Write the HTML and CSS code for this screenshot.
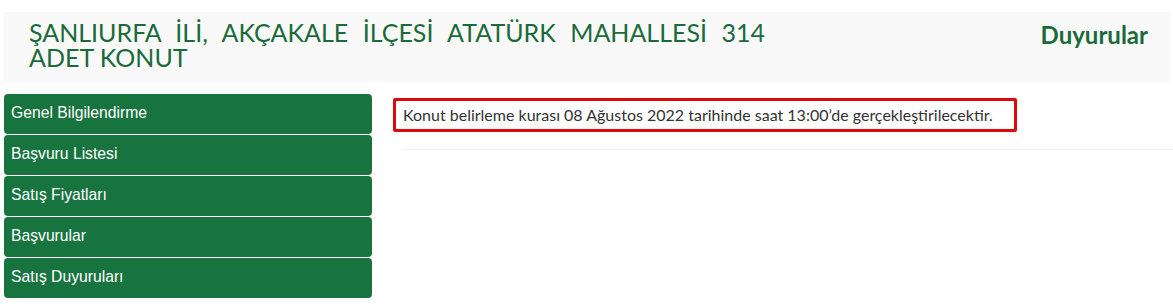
FILE: index.html
```html
<!DOCTYPE html>
<html lang="tr">
<head>
<meta charset="utf-8">
<title>Duyurular</title>
<link rel="stylesheet" href="styles.css">
</head>
<body>
<header class="page-head">
  <h1 class="title">ŞANLIURFA İLİ, AKÇAKALE İLÇESİ ATATÜRK MAHALLESİ 314 ADET KONUT</h1>
  <h2 class="section">Duyurular</h2>
</header>
<div class="main">
  <nav class="sidebar">
    <a class="nav-item" href="#">Genel Bilgilendirme</a>
    <a class="nav-item" href="#">Başvuru Listesi</a>
    <a class="nav-item" href="#">Satış Fiyatları</a>
    <a class="nav-item" href="#">Başvurular</a>
    <a class="nav-item" href="#">Satış Duyuruları</a>
  </nav>
  <section class="content">
    <div class="notice">Konut belirleme kurası 08 Ağustos 2022 tarihinde saat 13:00’de gerçekleştirilecektir.</div>
    <hr class="divider">
  </section>
</div>
</body>
</html>
```
FILE: styles.css
```css
* { box-sizing: border-box; }
body {
  margin: 0;
  background: #fff;
  font-family: "Lato", "Liberation Sans", sans-serif;
}
.page-head {
  margin: 12px 3px 0 3px;
  height: 71px;
  background: #f9f9f9;
  display: flex;
  justify-content: space-between;
  align-items: flex-start;
  padding: 0 22px 0 26px;
}
.title {
  margin: 8px 0 0 0;
  width: 736px;
  font-size: 25px;
  line-height: 25px;
  font-weight: 400;
  color: #1b6b3a;
  text-align: justify;
}
.section {
  margin: 9px 0 0 0;
  font-size: 24px;
  line-height: 28px;
  font-weight: 700;
  color: #1b6b3a;
}
.main {
  display: flex;
  margin-top: 11px;
}
.sidebar {
  margin-left: 4px;
  width: 368px;
  display: flex;
  flex-direction: column;
  gap: 1px;
}
.nav-item {
  display: block;
  height: 40px;
  line-height: 38px;
  padding-left: 7px;
  background: #18743f;
  color: #fff;
  border-radius: 4px;
  text-decoration: none;
  font-family: "Liberation Sans", Arial, sans-serif;
  font-size: 15.7px;
}
.content {
  flex: 1;
  padding-left: 21px;
  padding-top: 4px;
}
.notice {
  width: 624px;
  height: 34px;
  border: 3px solid #dd0a0a;
  border-radius: 2px;
  padding: 0 0 0 7px;
  line-height: 28px;
  font-size: 16px;
  color: #333;
}
.divider {
  margin: 17px 0 0 10px;
  border: 0;
  border-top: 1px solid #eee;
}
```
